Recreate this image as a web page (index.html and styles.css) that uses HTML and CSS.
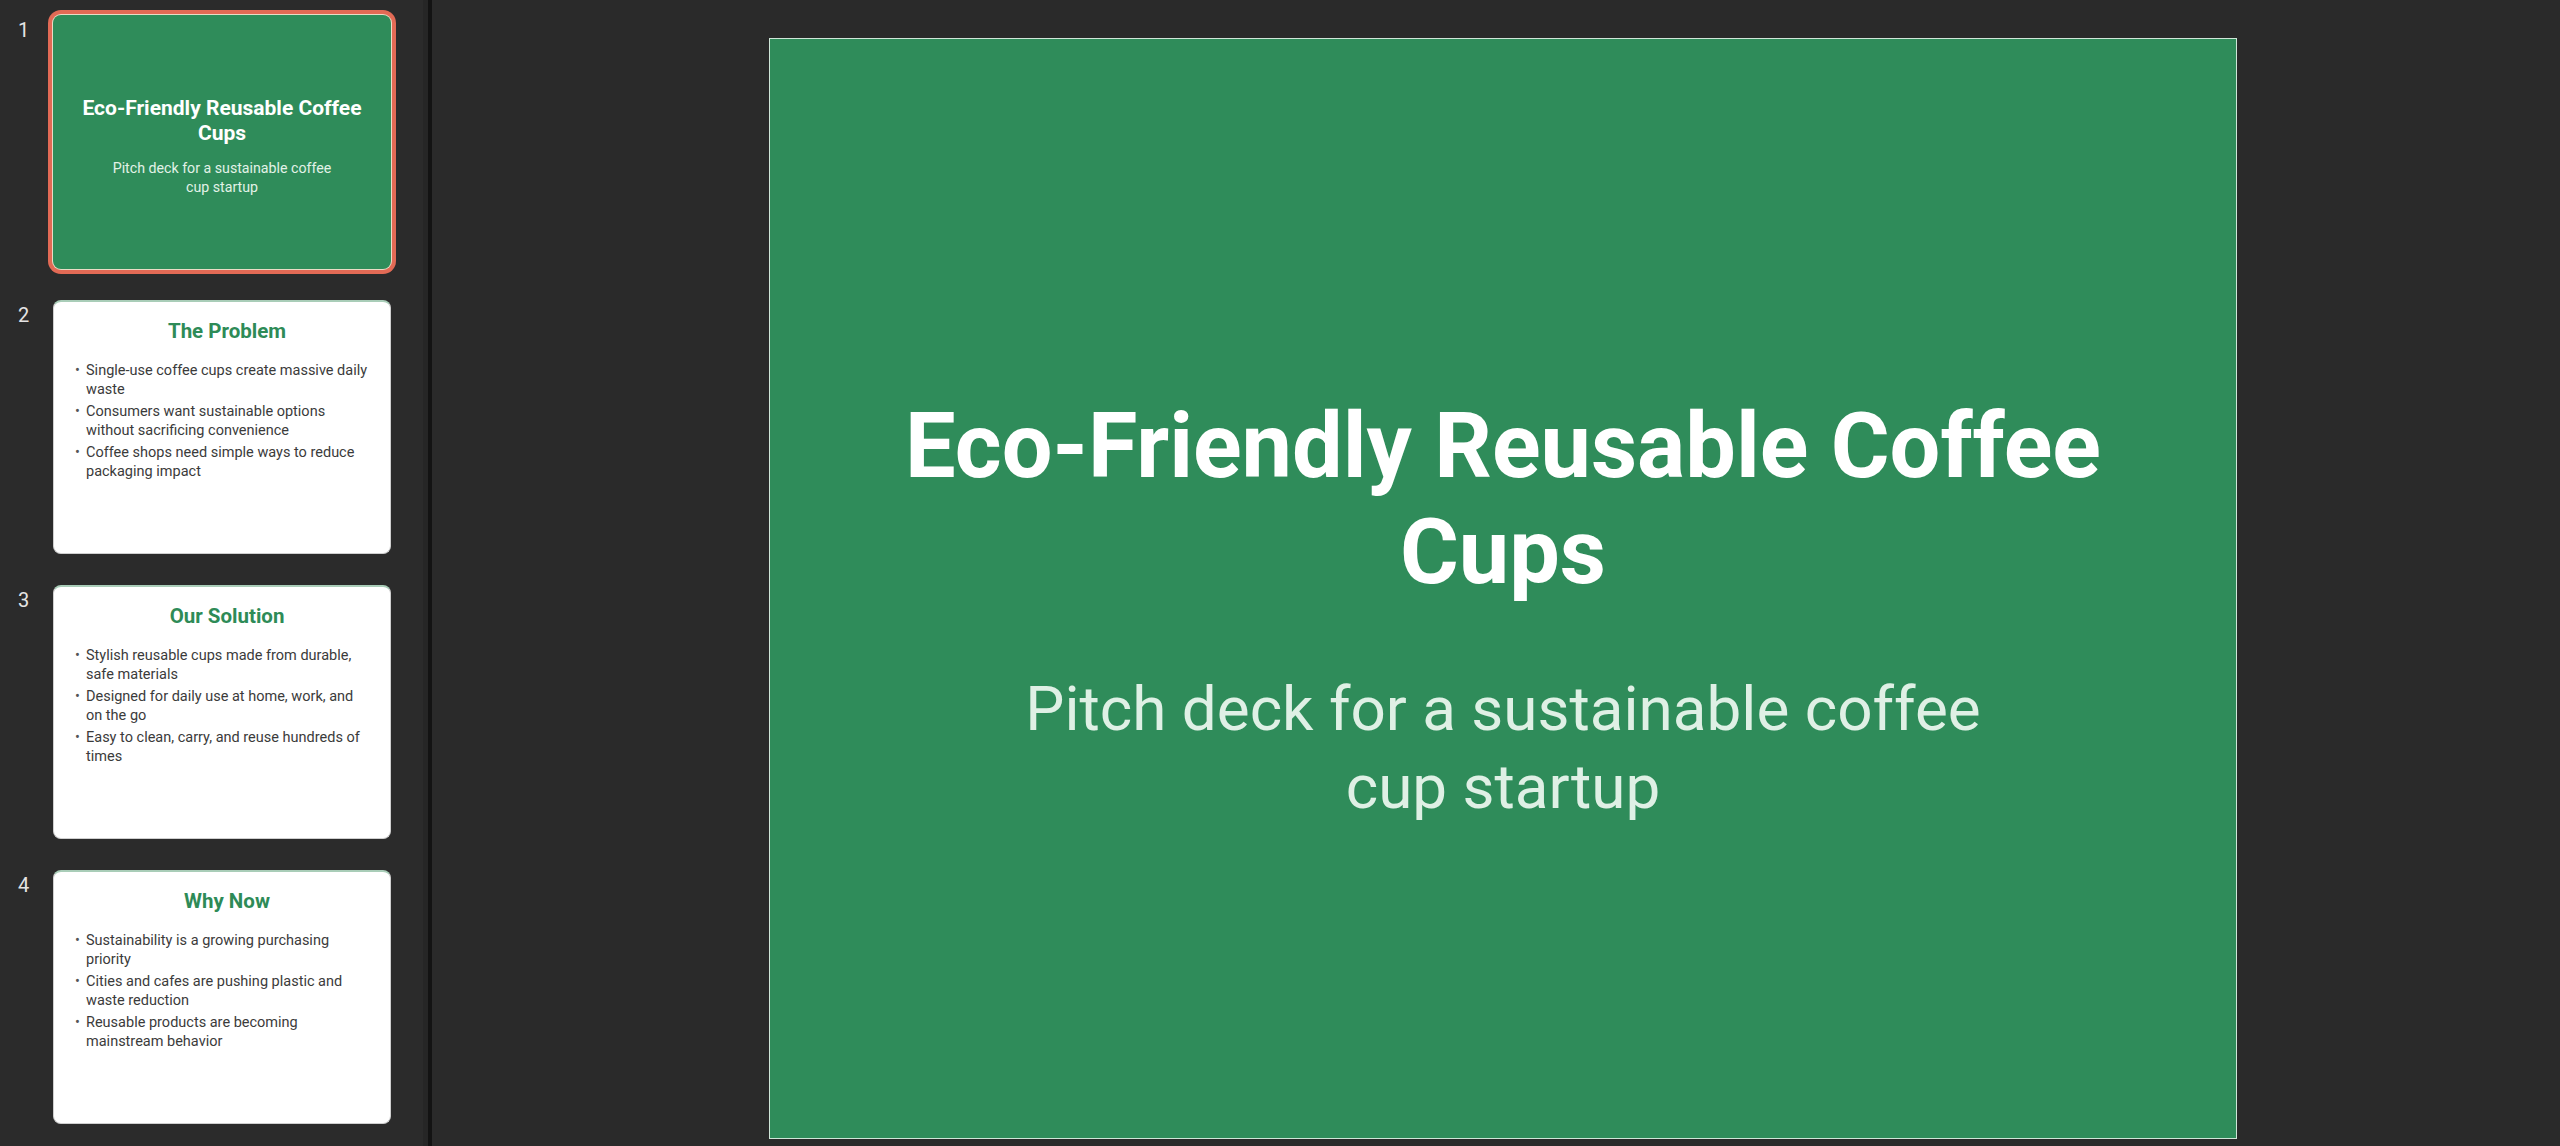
FILE: index.html
```html
<!DOCTYPE html>
<html lang="en">
<head>
<meta charset="utf-8">
<title>Eco-Friendly Reusable Coffee Cups</title>
<link rel="stylesheet" href="styles.css">
</head>
<body>
<div class="app">
  <aside class="sidebar">
    <div class="thumb-row">
      <div class="num">1</div>
      <div class="thumb thumb-title selected">
        <div class="t-title">Eco-Friendly Reusable Coffee Cups</div>
        <div class="t-sub">Pitch deck for a sustainable coffee cup startup</div>
      </div>
    </div>
    <div class="thumb-row">
      <div class="num">2</div>
      <div class="thumb thumb-content">
        <div class="c-title">The Problem</div>
        <ul class="c-list">
          <li>Single-use coffee cups create massive daily waste</li>
          <li>Consumers want sustainable options without sacrificing convenience</li>
          <li>Coffee shops need simple ways to reduce packaging impact</li>
        </ul>
      </div>
    </div>
    <div class="thumb-row">
      <div class="num">3</div>
      <div class="thumb thumb-content">
        <div class="c-title">Our Solution</div>
        <ul class="c-list">
          <li>Stylish reusable cups made from durable, safe materials</li>
          <li>Designed for daily use at home, work, and on the go</li>
          <li>Easy to clean, carry, and reuse hundreds of times</li>
        </ul>
      </div>
    </div>
    <div class="thumb-row">
      <div class="num">4</div>
      <div class="thumb thumb-content">
        <div class="c-title">Why Now</div>
        <ul class="c-list">
          <li>Sustainability is a growing purchasing priority</li>
          <li>Cities and cafes are pushing plastic and waste reduction</li>
          <li>Reusable products are becoming mainstream behavior</li>
        </ul>
      </div>
    </div>
  </aside>
  <main class="stage">
    <section class="slide">
      <h1 class="slide-title">Eco-Friendly Reusable Coffee Cups</h1>
      <p class="slide-sub">Pitch deck for a sustainable coffee cup startup</p>
    </section>
  </main>
</div>
</body>
</html>
```
FILE: styles.css
```css
* { box-sizing: border-box; }

html, body {
  margin: 0;
  padding: 0;
  height: 100%;
  background: #2a2a2a;
  font-family: Roboto, "Liberation Sans", sans-serif;
  overflow: hidden;
}

.app {
  display: flex;
  height: 100vh;
}

.sidebar {
  width: 432px;
  flex-shrink: 0;
  background: #2b2b2b;
  border-right: 4px solid #131313;
  box-shadow: inset -5px 0 0 #262626;
  padding-top: 15px;
  display: flex;
  flex-direction: column;
  gap: 31.5px;
}

.thumb-row {
  display: flex;
  align-items: flex-start;
}

.num {
  width: 53px;
  padding-left: 18px;
  padding-top: 4px;
  font-size: 20px;
  line-height: 23px;
  color: #e4e4e4;
}

.thumb {
  width: 338px;
  height: 253.5px;
  border-radius: 8px;
  overflow: hidden;
}

.thumb-title {
  background: #2f8c5a;
  display: flex;
  flex-direction: column;
  align-items: center;
  justify-content: center;
  padding: 10px 20px 0;
  text-align: center;
}

.thumb-title.selected {
  box-shadow: 0 0 0 1px #e9dcc6, 0 0 0 5px #e26a55;
  overflow: visible;
}

.t-title {
  color: #ffffff;
  font-weight: 700;
  font-size: 21px;
  line-height: 25px;
  max-width: 298px;
}

.t-sub {
  margin-top: 13px;
  color: #e2f2e7;
  font-size: 14.2px;
  line-height: 19px;
  max-width: 232px;
}

.thumb-content {
  background: #ffffff;
  border: 1px solid #cfcfcf;
  border-top: 2px solid #a9cdb8;
  padding: 17px 20px 0 21px;
}

.c-title {
  text-align: center;
  color: #2e8b57;
  font-weight: 700;
  font-size: 20.5px;
  line-height: 24px;
  padding-left: 9px;
}

.c-list {
  list-style: none;
  margin: 18px 0 0;
  padding: 0;
}

.c-list li {
  display: flex;
  color: #3b3b3b;
  font-size: 14.5px;
  line-height: 19px;
  margin-bottom: 3px;
}

.c-list li::before {
  content: "\2022";
  width: 11px;
  flex-shrink: 0;
  color: #555555;
}

.stage {
  flex: 1;
  background: #2a2a2a;
  padding: 38px 0 0 337px;
}

.slide {
  width: 1468px;
  height: 1101px;
  background: #2f8c5a;
  border: 1px solid #cfe6d8;
  display: flex;
  flex-direction: column;
  align-items: center;
  justify-content: center;
  padding-top: 42px;
  text-align: center;
}

.slide-title {
  margin: 0;
  color: #ffffff;
  font-weight: 700;
  font-size: 90px;
  line-height: 106px;
  max-width: 1300px;
}

.slide-sub {
  margin: 64px 0 0;
  color: #dff0e5;
  font-weight: 400;
  font-size: 62px;
  line-height: 78px;
  max-width: 1010px;
}
```
